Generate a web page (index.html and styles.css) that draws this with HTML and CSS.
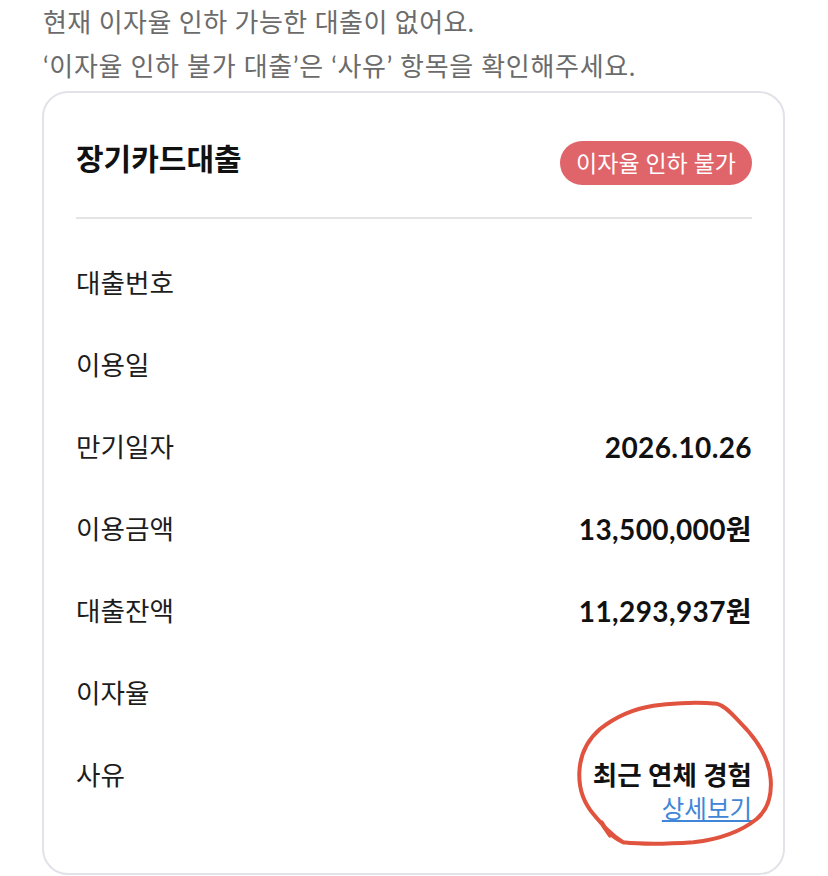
FILE: index.html
```html
<html>
    <head>
        <title>대출 이자율 인하</title>
        <meta charset="utf-8">
        <link rel="stylesheet" href="styles.css">
    </head>
    <body>
        <p class="intro">현재 이자율 인하 가능한 대출이 없어요.</p>
        <p class="intro introLong">‘이자율 인하 불가 대출’은 ‘사유’ 항목을 확인해주세요.</p>
        <div class="card">
            <div class="cardHead">
                <h2 class="cardTitle">장기카드대출</h2>
                <span class="badge">이자율 인하 불가</span>
            </div>
            <div class="rows">
                <div class="row"><span class="label">대출번호</span></div>
                <div class="row"><span class="label">이용일</span></div>
                <div class="row"><span class="label">만기일자</span><span class="value">2026.10.26</span></div>
                <div class="row"><span class="label">이용금액</span><span class="value">13,500,000원</span></div>
                <div class="row"><span class="label">대출잔액</span><span class="value">11,293,937원</span></div>
                <div class="row"><span class="label">이자율</span></div>
                <div class="row">
                    <span class="label">사유</span>
                    <div class="reason">
                        <span class="value reasonText">최근 연체 경험</span>
                        <a class="detailLink" href="#">상세보기</a>
                    </div>
                </div>
            </div>
            <!-- hand drawn circle around the reason -->
            <svg class="scribble" viewBox="0 0 720 510" width="240" height="170">
                <path d="M125 400 L150 440 L128 408 C145 430 165 450 190 460 C260 468 340 464 400 460 C470 452 540 430 590 390 C625 360 636 320 632 270 C628 210 590 150 540 100 C515 75 495 50 470 44 C400 38 320 44 280 50 C230 58 170 80 120 120 C80 155 60 200 58 250 C56 300 75 345 100 375 C125 405 150 435 190 460" />
            </svg>
        </div>
    </body>
</html>
```

FILE: styles.css
```css
body{
    margin: 0;
    background: #ffffff;
    font-family: "Lato", "Noto Sans CJK KR", sans-serif;
    height: 876px;
    overflow: hidden;
}
.intro{
    margin: 0;
    padding-left: 43px;
    font-size: 26px;
    letter-spacing: 0.42px;
    line-height: 44px;
    color: #6b6b6b;
    white-space: nowrap;
}
.introLong{
    letter-spacing: 0.7px;
}
.card{
    position: relative;
    box-sizing: border-box;
    width: 743px;
    height: 784px;
    margin: 3px 0 0 42px;
    padding: 0 31px 0 32px;
    border: 2px solid #e1e3e9;
    border-radius: 26px;
}
.cardHead{
    display: flex;
    align-items: center;
    justify-content: space-between;
    box-sizing: border-box;
    height: 126px;
    padding-top: 3px;
    border-bottom: 2px solid #e4e4e6;
}
.cardTitle{
    margin: 0;
    font-size: 30px;
    font-weight: 700;
    color: #111111;
}
.badge{
    display: block;
    margin-top: 12px;
    padding: 0 16px;
    height: 44px;
    line-height: 44px;
    border-radius: 22px;
    background: #e0656a;
    color: #ffffff;
    font-size: 23px;
}
.rows{
    padding-top: 23px;
}
.row{
    display: flex;
    justify-content: space-between;
    align-items: flex-start;
    height: 82px;
    line-height: 40px;
    padding-top: 21px;
    box-sizing: border-box;
}
.label{
    font-size: 26.6px;
    color: #1d1d1d;
}
.value{
    font-size: 28px;
    letter-spacing: 0.4px;
    font-weight: 700;
    color: #111111;
}
.reason{
    display: flex;
    flex-direction: column;
    align-items: flex-end;
}
.reasonText{
    font-size: 26.5px;
    letter-spacing: 0;
}
.detailLink{
    margin-top: -1px;
    line-height: 30px;
    font-size: 24.5px;
    color: #3f86d8;
}
.scribble{
    position: absolute;
    left: 516px;
    top: 596px;
    fill: none;
    stroke: #e0533f;
    stroke-width: 12;
    stroke-linecap: round;
    stroke-linejoin: round;
}
```
